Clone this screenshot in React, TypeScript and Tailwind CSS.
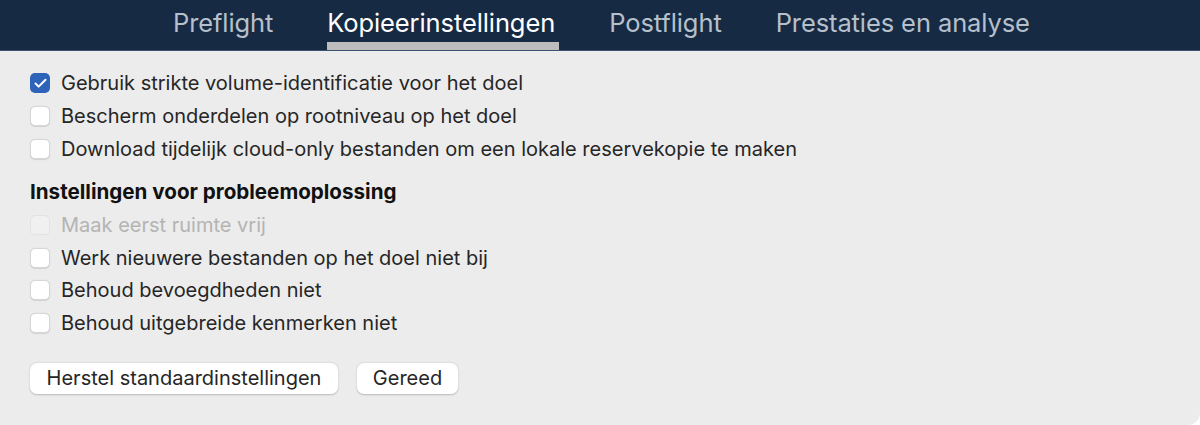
import { Check } from 'lucide-react';

const TABS = ['Preflight', 'Kopieerinstellingen', 'Postflight', 'Prestaties en analyse'];

function Box({ checked, disabled }: { checked?: boolean; disabled?: boolean }) {
  if (checked) {
    return (
      <span className="w-[20px] h-[20px] rounded-[5px] bg-[#2d63b8] flex items-center justify-center shrink-0">
        <Check className="w-[15px] h-[15px] text-white" strokeWidth={3.2} />
      </span>
    );
  }
  return (
    <span
      className={`w-[20px] h-[20px] rounded-[5px] shrink-0 border ${
        disabled
          ? 'bg-[#f0f0f0] border-[#e2e2e2]'
          : 'bg-white border-[#d6d6d6] shadow-[0_0.5px_1px_rgba(0,0,0,0.12)]'
      }`}
    />
  );
}

function Row({ label, checked, disabled }: { label: string; checked?: boolean; disabled?: boolean }) {
  return (
    <div className="h-[32.8px] flex items-center gap-[11px]">
      <Box checked={checked} disabled={disabled} />
      <span className={`text-[20px] ${disabled ? 'text-[#b4b4b4]' : 'text-[#262626]'}`}>{label}</span>
    </div>
  );
}

export default function App() {
  return (
    <div
      className="w-[1200px] h-[425px] bg-[#ececec] flex flex-col overflow-hidden rounded-br-[12px]"
      style={{ fontFamily: 'Inter, "Noto Sans", sans-serif' }}
    >
      <header className="h-[51px] bg-[#172a44] flex items-stretch pl-[173px] gap-[54px] border-b border-[#3d5270] shrink-0">
        {TABS.map((t) => {
          const active = t === 'Kopieerinstellingen';
          return (
            <div key={t} className="relative flex items-center pb-[4px]">
              <span className={`text-[25.5px] tracking-[-0.1px] ${active ? 'text-white' : 'text-[#b6c0cc]'}`}>{t}</span>
              {active && <span className="absolute left-0 right-[-4px] bottom-0 h-[8px] bg-[#bdbdbd]" />}
            </div>
          );
        })}
      </header>

      <main className="flex-1 pl-[30px] pt-[16px] flex flex-col">
        <Row label="Gebruik strikte volume-identificatie voor het doel" checked />
        <Row label="Bescherm onderdelen op rootniveau op het doel" />
        <Row label="Download tijdelijk cloud-only bestanden om een lokale reservekopie te maken" />

        <h2 className="mt-[11px] h-[32px] flex items-center text-[20.6px] font-bold text-[#111]">
          Instellingen voor probleemoplossing
        </h2>
        <Row label="Maak eerst ruimte vrij" disabled />
        <Row label="Werk nieuwere bestanden op het doel niet bij" />
        <Row label="Behoud bevoegdheden niet" />
        <Row label="Behoud uitgebreide kenmerken niet" />

        <div className="mt-[23px] flex gap-[19px]">
          <button className="h-[31px] w-[308px] rounded-[7px] bg-white text-[20px] text-[#262626] shadow-[0_0.5px_2px_rgba(0,0,0,0.22)]">
            Herstel standaardinstellingen
          </button>
          <button className="h-[31px] w-[101px] rounded-[7px] bg-white text-[20px] text-[#262626] shadow-[0_0.5px_2px_rgba(0,0,0,0.22)]">
            Gereed
          </button>
        </div>
      </main>
    </div>
  );
}
